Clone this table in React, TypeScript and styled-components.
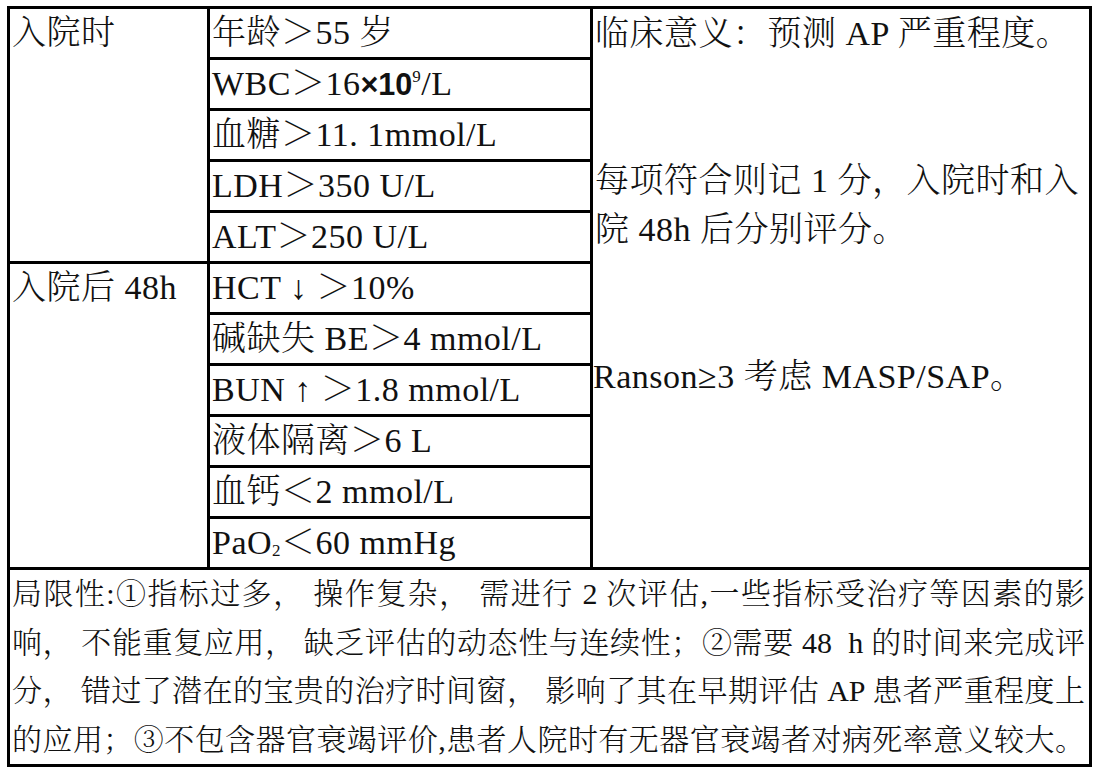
import React from "react";
import styled, { createGlobalStyle } from "styled-components";

const GlobalStyle = createGlobalStyle`
  html, body {
    margin: 0;
    padding: 0;
    background: #ffffff;
  }
  body {
    font-family: "Liberation Serif", "Noto Serif CJK SC", "Noto Sans CJK SC", serif;
    color: #111111;
  }
`;

const Page = styled.div`
  padding: 6px 0 0 7px;
`;

const Sheet = styled.div`
  display: grid;
  grid-template-columns: 197px 380px 496px;
  grid-template-rows: repeat(11, 48px) auto;
  gap: 3px;
  padding: 3px;
  width: fit-content;
  background: #000000;
  font-size: 34px;
  letter-spacing: 0.5px;
  font-weight: 300;
`;

const GroupCell = styled.div<{ $start: number; $span: number }>`
  grid-column: 1;
  grid-row: ${(p) => p.$start} / span ${(p) => p.$span};
  background: #ffffff;
  padding: 0 2px;
  line-height: 48px;
  white-space: nowrap;
`;

const ItemCell = styled.div<{ $row: number }>`
  grid-column: 2;
  grid-row: ${(p) => p.$row};
  background: #ffffff;
  padding: 0 2px;
  line-height: 48px;
  white-space: nowrap;
  overflow: hidden;
`;

const NoteCell = styled.div`
  grid-column: 3;
  grid-row: 1 / span 11;
  background: #ffffff;
  padding: 0 2px;
  display: flex;
  flex-direction: column;
`;

const NoteLine = styled.div<{ $blankBefore?: number; $flush?: boolean }>`
  line-height: 49px;
  white-space: nowrap;
  margin-top: ${(p) => (p.$blankBefore ?? 0) * 49}px;
  margin-left: ${(p) => (p.$flush ? -2 : 0)}px;
`;

const Footer = styled.div`
  grid-column: 1 / span 3;
  grid-row: 12;
  background: #ffffff;
  padding: 0 4px 0 2px;
  font-size: 30px;
  letter-spacing: 0;
`;

const FooterLine = styled.div`
  line-height: 48.5px;
  text-align: justify;
  text-align-last: justify;
`;

const BoldSans = styled.span`
  font-family: "Liberation Sans", "Noto Sans", sans-serif;
  font-weight: 700;
  font-size: 0.9em;
  letter-spacing: 0;
`;

const Sup = styled.sup`
  font-size: 0.5em;
  vertical-align: 0.75em;
  line-height: 0;
`;

const Sub = styled.sub`
  font-size: 0.5em;
  vertical-align: -0.1em;
  line-height: 0;
`;

const items: React.ReactNode[] = [
  <>年龄＞55 岁</>,
  <>
    WBC＞16<BoldSans>×10</BoldSans>
    <Sup>9</Sup>/L
  </>,
  <>血糖＞11. 1mmol/L</>,
  <>LDH＞350 U/L</>,
  <>ALT＞250 U/L</>,
  <>HCT ↓ ＞10%</>,
  <>碱缺失 BE＞4 mmol/L</>,
  <>BUN ↑ ＞1.8 mmol/L</>,
  <>液体隔离＞6 L</>,
  <>血钙＜2 mmol/L</>,
  <>
    PaO<Sub>2</Sub>＜60 mmHg
  </>,
];

const footerLines = [
  "局限性:①指标过多， 操作复杂， 需进行 2 次评估,一些指标受治疗等因素的影",
  "响， 不能重复应用， 缺乏评估的动态性与连续性；②需要 48 \u00a0h 的时间来完成评",
  "分， 错过了潜在的宝贵的治疗时间窗， 影响了其在早期评估 AP 患者严重程度上",
  "的应用；③不包含器官衰竭评价,患者人院时有无器官衰竭者对病死率意义较大。",
];

export default function App() {
  return (
    <>
      <GlobalStyle />
      <Page>
        <Sheet>
          <GroupCell $start={1} $span={5}>入院时</GroupCell>
          <GroupCell $start={6} $span={6}>入院后 48h</GroupCell>
          {items.map((item, i) => (
            <ItemCell key={i} $row={i + 1}>
              {item}
            </ItemCell>
          ))}
          <NoteCell>
            <NoteLine>临床意义：预测 AP 严重程度。</NoteLine>
            <NoteLine $blankBefore={2}>每项符合则记 1 分，入院时和入</NoteLine>
            <NoteLine>院 48h 后分别评分。</NoteLine>
            <NoteLine $blankBefore={2} $flush>
              Ranson≥3 考虑 MASP/SAP。
            </NoteLine>
          </NoteCell>
          <Footer>
            {footerLines.map((line, i) => (
              <FooterLine key={i}>{line}</FooterLine>
            ))}
          </Footer>
        </Sheet>
      </Page>
    </>
  );
}
